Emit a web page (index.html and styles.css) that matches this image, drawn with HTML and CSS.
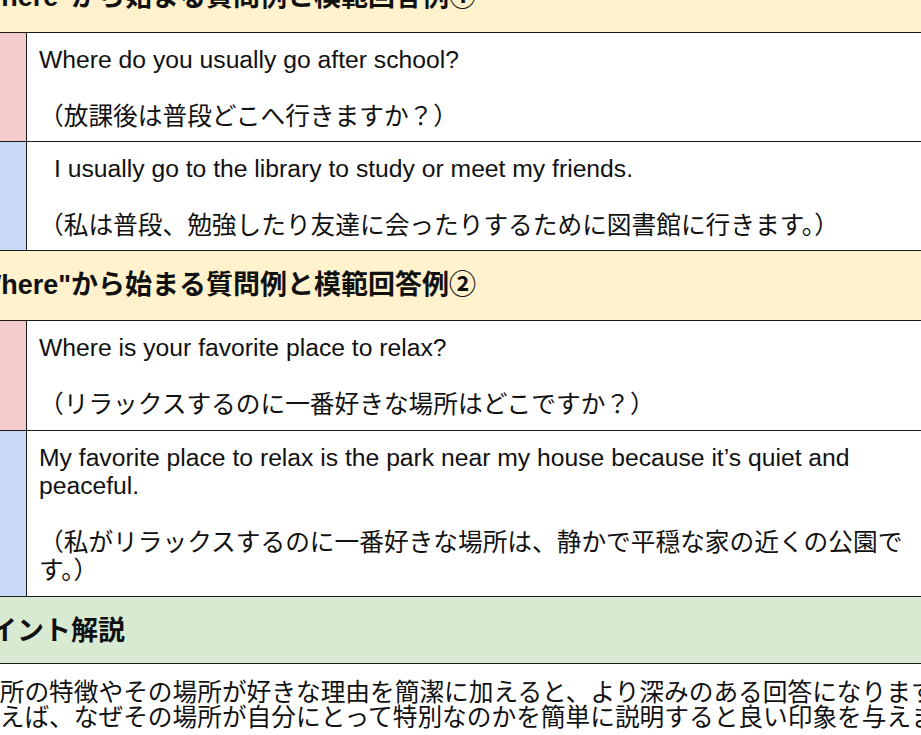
FILE: index.html
```html
<!DOCTYPE html>
<html lang="ja">
<head>
<meta charset="utf-8">
<title>Where 質問例</title>
<link rel="stylesheet" href="styles.css">
</head>
<body>
<div class="page">
<table class="qa">
  <colgroup><col class="c-label"><col class="c-body"></colgroup>
  <tr><td class="head yellow" colspan="2">"Where"から始まる質問例と模範回答例①</td></tr>
  <tr>
    <td class="label q">Q</td>
    <td class="body">
      <p>Where do you usually go after school?</p>
      <p class="blank">&nbsp;</p>
      <p>（放課後は普段どこへ行きますか？）</p>
    </td>
  </tr>
  <tr>
    <td class="label a">A</td>
    <td class="body">
      <p class="indent">I usually go to the library to study or meet my friends.</p>
      <p class="blank">&nbsp;</p>
      <p>（私は普段、勉強したり友達に会ったりするために図書館に行きます。）</p>
    </td>
  </tr>
  <tr><td class="head yellow" colspan="2">"Where"から始まる質問例と模範回答例②</td></tr>
  <tr>
    <td class="label q">Q</td>
    <td class="body">
      <p>Where is your favorite place to relax?</p>
      <p class="blank">&nbsp;</p>
      <p>（リラックスするのに一番好きな場所はどこですか？）</p>
    </td>
  </tr>
  <tr>
    <td class="label a">A</td>
    <td class="body">
      <p>My favorite place to relax is the park near my house because it’s quiet and peaceful.</p>
      <p class="blank">&nbsp;</p>
      <p>（私がリラックスするのに一番好きな場所は、静かで平穏な家の近くの公園です。）</p>
    </td>
  </tr>
  <tr><td class="head green" colspan="2">ポイント解説</td></tr>
  <tr>
    <td class="note" colspan="2">
      <p>場所の特徴やその場所が好きな理由を簡潔に加えると、より深みのある回答になります。</p>
      <p>例えば、なぜその場所が自分にとって特別なのかを簡単に説明すると良い印象を与えます。</p>
    </td>
  </tr>
</table>
</div>
</body>
</html>
```
FILE: styles.css
```css
html, body {
  margin: 0;
  padding: 0;
  background: #ffffff;
}
body {
  width: 921px;
  height: 735px;
  overflow: hidden;
  font-family: "Liberation Sans", "Noto Sans CJK JP", sans-serif;
  color: #111111;
}
.page {
  margin: -38px 0 0 -38px;
  width: 974px;
}
.qa {
  width: 974px;
  border-collapse: collapse;
  table-layout: fixed;
}
.c-label { width: 64px; }
.qa td {
  border: 1px solid #1a1a1a;
  vertical-align: top;
}
.head {
  font-size: 27px;
  font-weight: bold;
  line-height: 36px;
  padding: 16px 12px 17px 0;
  white-space: nowrap;
}
.yellow { background: #fff2cc; }
.green {
  background: #d9ead3;
  padding-bottom: 14px;
}
.label {
  font-size: 24.7px;
  font-weight: bold;
  text-align: center;
  vertical-align: middle !important;
  padding: 0 9px 0 0;
}
.label.q { background: #f4cccc; }
.label.a { background: #c9daf8; }
.body {
  font-size: 24.7px;
  line-height: 28.4px;
  padding: 13px 12px 10px;
}
.body p, .note p {
  margin: 0;
}
.indent { padding-left: 15px; }
.note {
  font-size: 24.7px;
  line-height: 25px;
  padding: 16px 12px 10px;
  white-space: nowrap;
  border-right: none !important;
}
```
